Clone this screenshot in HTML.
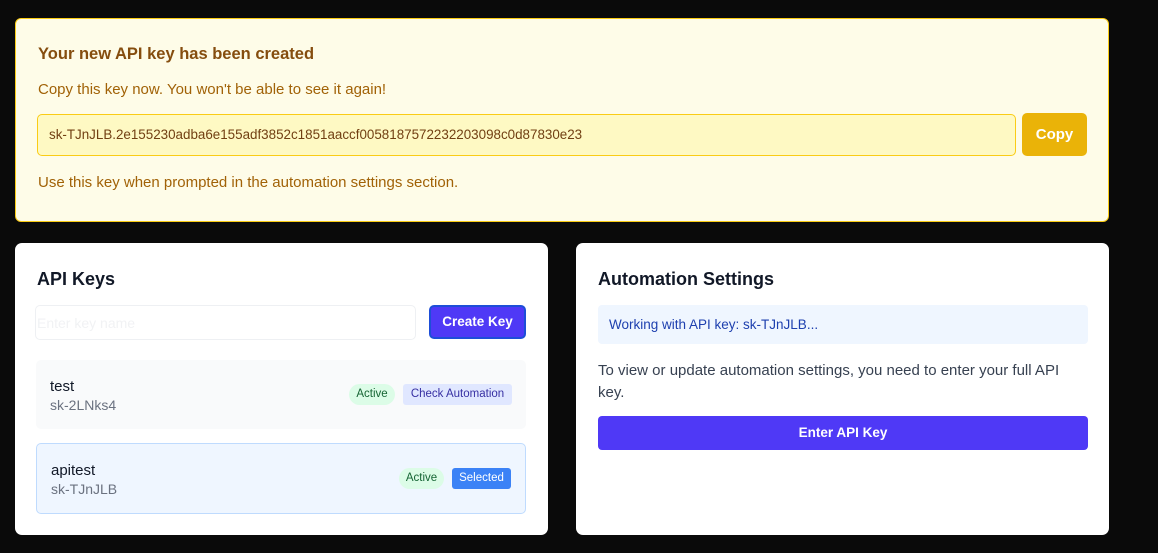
<!DOCTYPE html>
<html><head><style>
*{box-sizing:border-box;margin:0;padding:0}
body{width:1158px;height:553px;background:#0a0a0a;font-family:"Liberation Sans",sans-serif;position:relative;overflow:hidden}
.abs{position:absolute}
.banner{left:15px;top:18px;width:1094px;height:204px;background:#fefce8;border:1px solid #facc15;border-radius:6px}
.card{background:#fff;border-radius:7px;top:243px;height:292px}
</style></head><body>
<div class="abs banner">
 <div class="abs" style="left:22px;top:26px;font-size:16.5px;font-weight:bold;color:#854d0e">Your new API key has been created</div>
 <div class="abs" style="left:22px;top:62px;font-size:15px;color:#a16207">Copy this key now. You won't be able to see it again!</div>
 <div class="abs" style="left:21px;top:95px;width:979px;height:42px;background:#fef9c3;border:1px solid #facc15;border-radius:5px;font-size:13.4px;color:#713f12;padding:12px 11px">sk-TJnJLB.2e155230adba6e155adf3852c1851aaccf0058187572232203098c0d87830e23</div>
 <div class="abs" style="left:1006px;top:94px;width:65px;height:43px;background:#eab308;border-radius:5px;color:#fff;font-size:15px;font-weight:bold;text-align:center;line-height:43px">Copy</div>
 <div class="abs" style="left:22px;top:155px;font-size:15px;color:#a16207">Use this key when prompted in the automation settings section.</div>
</div>
<div class="abs card" style="left:15px;width:533px">
 <div class="abs" style="left:22px;top:26px;font-size:18px;font-weight:bold;color:#111827">API Keys</div>
 <div class="abs" style="left:20px;top:62px;width:381px;height:35px;border:1px solid #eef0f3;border-radius:5px;font-size:14px;color:#f1f2f4;padding:9px 1px">Enter key name</div>
 <div class="abs" style="left:414px;top:62px;width:97px;height:34px;background:#4f39f6;border:2px solid #1d4ed8;border-radius:5px;color:#fff;font-size:13.5px;font-weight:bold;text-align:center;line-height:30px">Create Key</div>
 <div class="abs" style="left:21px;top:117px;width:490px;height:69px;background:#f9fafb;border-radius:5px">
  <div class="abs" style="left:14px;top:18px;font-size:15px;color:#111827">test</div>
  <div class="abs" style="left:14px;top:37px;font-size:14px;color:#6b7280">sk-2LNks4</div>
  <div class="abs" style="left:313px;top:24px;width:46px;height:21px;background:#dcfce7;border-radius:11px;color:#166534;font-size:11.5px;text-align:center;line-height:21px">Active</div>
  <div class="abs" style="left:367px;top:24px;width:109px;height:21px;background:#e0e7ff;border-radius:3px;color:#3730a3;font-size:11.5px;text-align:center;line-height:21px">Check Automation</div>
 </div>
 <div class="abs" style="left:21px;top:200px;width:490px;height:71px;background:#eff6ff;border:1px solid #bfdbfe;border-radius:5px">
  <div class="abs" style="left:14px;top:18px;font-size:15px;color:#111827">apitest</div>
  <div class="abs" style="left:14px;top:37px;font-size:14px;color:#6b7280">sk-TJnJLB</div>
  <div class="abs" style="left:362px;top:24px;width:45px;height:21px;background:#dcfce7;border-radius:11px;color:#166534;font-size:11.5px;text-align:center;line-height:21px">Active</div>
  <div class="abs" style="left:415px;top:24px;width:59px;height:21px;background:#3b82f6;border-radius:3px;color:#fff;font-size:11.5px;text-align:center;line-height:21px">Selected</div>
 </div>
</div>
<div class="abs card" style="left:576px;width:533px">
 <div class="abs" style="left:22px;top:26px;font-size:18px;font-weight:bold;color:#111827">Automation Settings</div>
 <div class="abs" style="left:22px;top:62px;width:490px;height:39px;background:#eff6ff;border-radius:4px;font-size:13.5px;color:#1e40af;padding:12px 11px">Working with API key: sk-TJnJLB...</div>
 <div class="abs" style="left:22px;top:117px;width:475px;font-size:15px;line-height:22px;color:#374151">To view or update automation settings, you need to enter your full API key.</div>
 <div class="abs" style="left:22px;top:173px;width:490px;height:34px;background:#4f39f6;border-radius:4px;color:#fff;font-size:13.5px;font-weight:bold;text-align:center;line-height:34px">Enter API Key</div>
</div>
</body></html>
